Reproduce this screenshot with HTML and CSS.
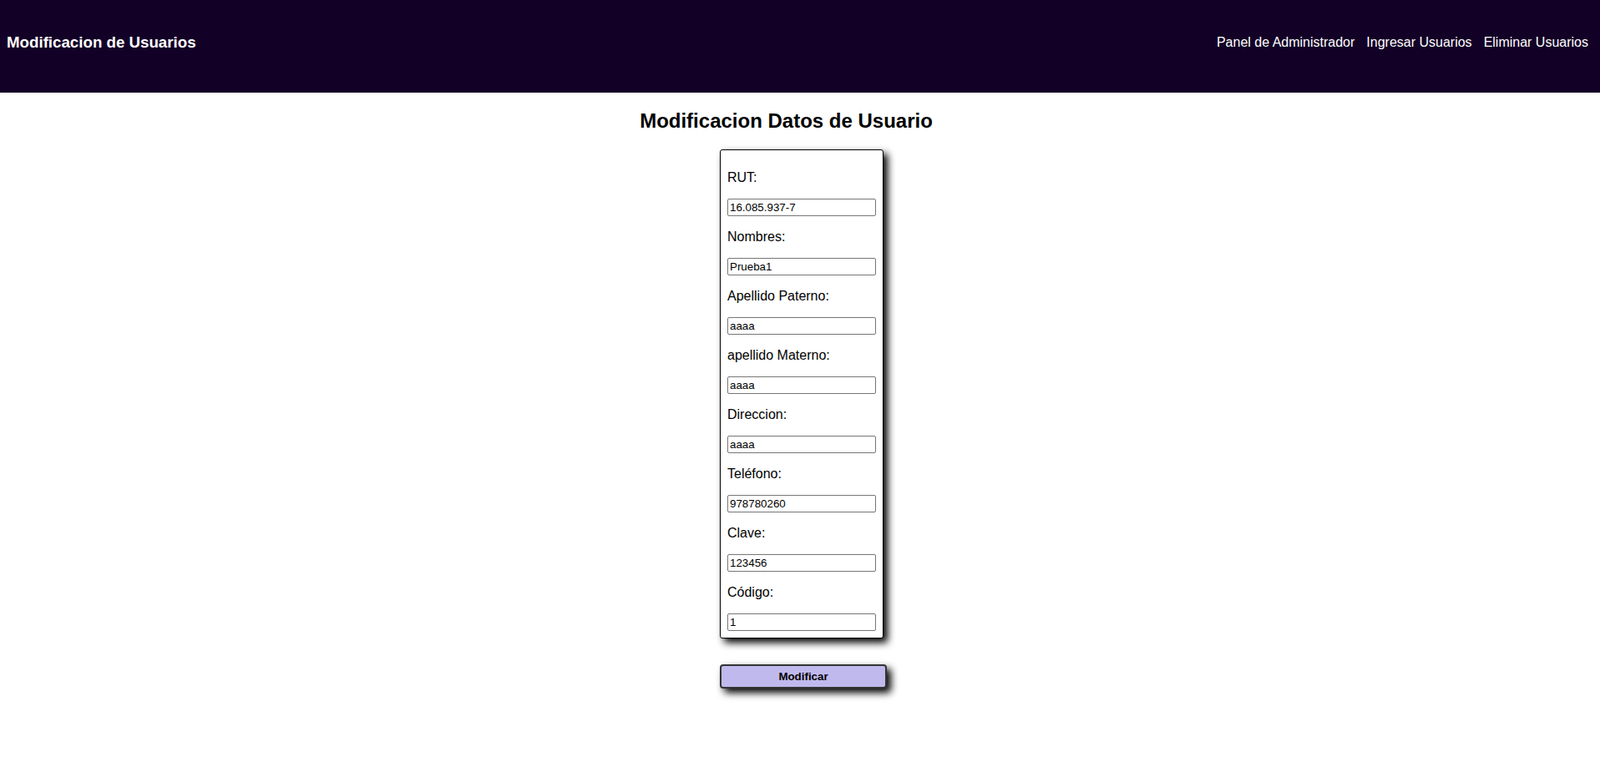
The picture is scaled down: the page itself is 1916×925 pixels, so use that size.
FILE: index.html
```html
<!DOCTYPE html>
<html lang="es">
<head>
<meta charset="utf-8">
<title>Modificacion de Usuarios</title>
<link rel="stylesheet" href="styles.css">
</head>
<body>
<header class="topbar">
  <h3 class="brand">Modificacion de Usuarios</h3>
  <nav class="nav">
    <a href="#">Panel de Administrador</a>
    <a href="#">Ingresar Usuarios</a>
    <a href="#">Eliminar Usuarios</a>
  </nav>
</header>
<main class="main">
  <h2 class="page-title">Modificacion Datos de Usuario</h2>
  <div class="content">
    <form class="user-form">
      <label class="field-label">RUT:</label>
      <input class="field-input" type="text" value="16.085.937-7">
      <label class="field-label">Nombres:</label>
      <input class="field-input" type="text" value="Prueba1">
      <label class="field-label">Apellido Paterno:</label>
      <input class="field-input" type="text" value="aaaa">
      <label class="field-label">apellido Materno:</label>
      <input class="field-input" type="text" value="aaaa">
      <label class="field-label">Direccion:</label>
      <input class="field-input" type="text" value="aaaa">
      <label class="field-label">Teléfono:</label>
      <input class="field-input" type="text" value="978780260">
      <label class="field-label">Clave:</label>
      <input class="field-input" type="text" value="123456">
      <label class="field-label">Código:</label>
      <input class="field-input" type="text" value="1">
    </form>
    <button class="submit-btn" type="button">Modificar</button>
  </div>
</main>
</body>
</html>
```

FILE: styles.css
```css
html, body {
  margin: 0;
  padding: 0;
  background: #ffffff;
  font-family: "Liberation Sans", Arial, sans-serif;
}

.topbar {
  box-sizing: border-box;
  height: 111px;
  background: #130026;
  display: flex;
  justify-content: space-between;
  align-items: center;
  padding: 0 14px 10px 8px;
}

.brand {
  margin: 0;
  color: #ffffff;
  font-size: 18.72px;
  font-weight: bold;
  line-height: 21px;
}

.nav {
  display: flex;
  gap: 14px;
  padding-top: 1px;
}

.nav a {
  color: #ffffff;
  text-decoration: none;
  font-size: 16px;
  line-height: 18px;
}

.main {
  padding-bottom: 100px;
}

.page-title {
  margin: 20px 0;
  padding-right: 33px;
  text-align: center;
  font-size: 24px;
  line-height: 28px;
  font-weight: bold;
  color: #000000;
}

.content {
  margin-left: calc(50% - 96px);
  width: 200px;
}

.user-form {
  box-sizing: border-box;
  width: 196px;
  margin: 0;
  padding: 8px;
  border: 1px solid #000000;
  border-radius: 3px;
  box-shadow: 5px 5px 10px #000000;
  background: #ffffff;
}

.field-label {
  display: block;
  margin: 16px 0;
  font-size: 16px;
  line-height: 18px;
  color: #000000;
}

.field-input {
  display: block;
  box-sizing: border-box;
  width: 100%;
  height: 21px;
  margin: 0;
  padding: 1px 2px;
  border: 1px solid #767676;
  border-radius: 2px;
  font-family: "Liberation Sans", Arial, sans-serif;
  font-size: 13.333px;
  color: #000000;
  background: #ffffff;
}

.submit-btn {
  display: block;
  box-sizing: border-box;
  width: 200px;
  height: 29px;
  margin: 31px 0 0;
  padding: 0;
  border: 2px solid #333333;
  border-radius: 4px;
  background: #c0b9ed;
  box-shadow: 5px 5px 10px #000000;
  font-family: "Liberation Sans", Arial, sans-serif;
  font-size: 13.333px;
  font-weight: bold;
  color: #000000;
}
```
